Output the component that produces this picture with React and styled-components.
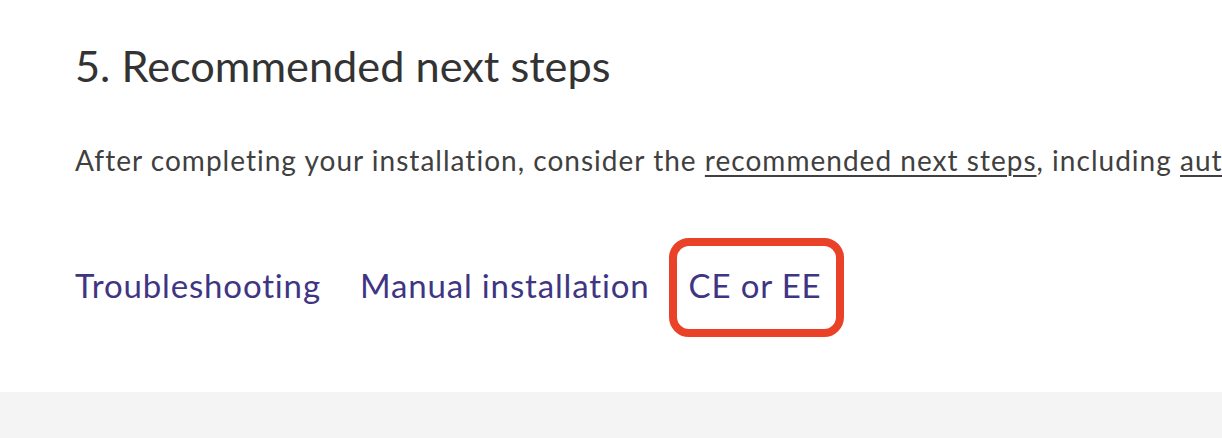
import React from 'react';
import styled, { createGlobalStyle } from 'styled-components';

const GlobalStyle = createGlobalStyle`
  html, body {
    margin: 0;
    padding: 0;
    background: #ffffff;
  }
  body {
    font-family: Lato, "Open Sans", sans-serif;
    overflow: hidden;
  }
`;

const App = () => {
  return (
    <>
      <GlobalStyle />
      <Page>
        <Section>
          <Heading>5. Recommended next steps</Heading>
          <Paragraph>
            After completing your installation, consider the{' '}
            <InlineLink href="#">recommended next steps</InlineLink>, including{' '}
            <InlineLink href="#">authentication options</InlineLink> and sign-up restrictions.
          </Paragraph>
          <LinkRow>
            <NavLink href="#">Troubleshooting</NavLink>
            <NavLink href="#">Manual installation</NavLink>
            <NavLink href="#" $highlight>CE or EE</NavLink>
          </LinkRow>
        </Section>
        <Footer />
      </Page>
    </>
  );
};

const Page = styled.div`
  width: 1222px;
  height: 438px;
  display: flex;
  flex-direction: column;
  overflow: hidden;
`;

const Section = styled.section`
  height: 392px;
  box-sizing: border-box;
  padding: 33px 0 0 75px;
  overflow: hidden;
`;

const Heading = styled.h2`
  margin: 0;
  font-size: 43.3px;
  font-weight: 400;
  line-height: 64px;
  color: #333333;
  white-space: nowrap;
`;

const Paragraph = styled.p`
  margin: 43px 0 0;
  font-size: 28px;
  line-height: 40px;
  letter-spacing: 1.02px;
  color: #404040;
  white-space: nowrap;
`;

const InlineLink = styled.a`
  color: #404040;
  text-decoration: underline;
  text-decoration-thickness: 2px;
  text-underline-offset: 4px;
`;

const LinkRow = styled.nav`
  display: flex;
  align-items: center;
  gap: 39px;
  margin-top: 85px;
`;

const NavLink = styled.a`
  position: relative;
  font-size: 33px;
  line-height: 40px;
  letter-spacing: 0.85px;
  color: #3f3683;
  text-decoration: none;
  white-space: nowrap;

  ${({ $highlight }) =>
    $highlight &&
    `
    &::after {
      content: '';
      position: absolute;
      left: -20px;
      right: -22px;
      top: -27px;
      bottom: -32px;
      border: 8px solid #ea4129;
      border-radius: 20px;
    }
  `}
`;

const Footer = styled.footer`
  flex: 1;
  background: #f4f4f4;
`;

export default App;
